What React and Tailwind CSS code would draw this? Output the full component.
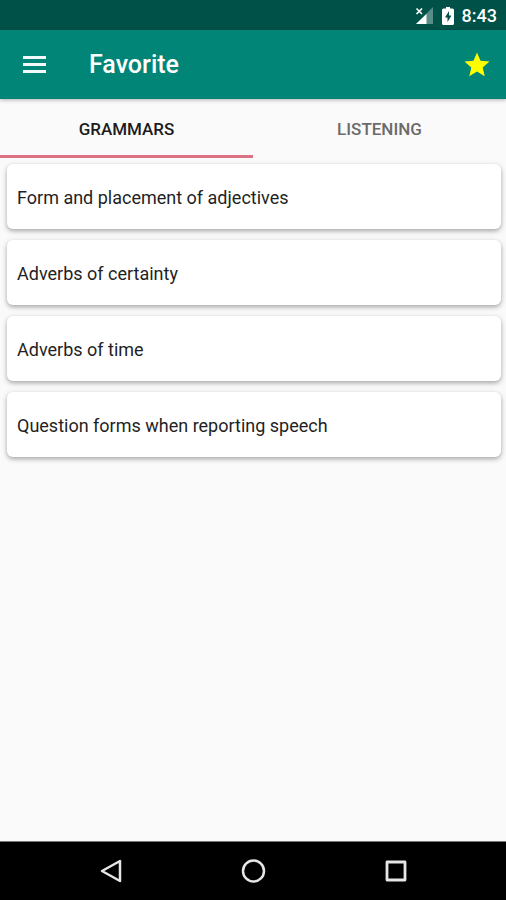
import { useState } from "react";

const favorites = {
    Grammars: [
        "Form and placement of adjectives",
        "Adverbs of certainty",
        "Adverbs of time",
        "Question forms when reporting speech",
    ],
    Listening: [],
};

function StatusBar() {
    return (
        <div className="flex h-[30px] items-center justify-end bg-[#005147] pr-[9px] pt-px text-white">
            <svg className="mr-2 h-5 w-5" viewBox="0 0 20 20" aria-label="No signal">
                <path d="M19 1V18H2z" fill="#fff" fillOpacity="0.35" />
                <path d="M12.5 8V18H2z" fill="#fff" />
                <path d="M2.5 2.5l5.5 5.5M8 2.5L2.5 8" stroke="#fff" strokeWidth="1.6" />
            </svg>
            <svg className="mr-2 h-5 w-3" viewBox="0 0 12 20" aria-label="Battery charging">
                <path d="M4 1h4v1.5h2.500a1.500 1.500 0 0 1 1.500 1.500v13.500a1.500 1.500 0 0 1-1.500 1.500h-9a1.500 1.500 0 0 1-1.500-1.500V4a1.500 1.500 0 0 1 1.500-1.500H4z" fill="#fff" />
                <path d="M7 5L3 11.500h2.500V16l4-6.500H7z" fill="#005147" />
            </svg>
            <span className="text-lg font-medium leading-5">8:43</span>
        </div>
    );
}

function Header() {
    return (
        <header className="relative flex h-[69px] items-center bg-[#008577] pl-[17px] pr-[14px] text-white shadow-[0_1px_4px_rgba(0,0,0,0.3)]">
            <button type="button" aria-label="Open menu" className="flex h-9 w-9 items-center justify-center">
                <svg className="h-6 w-6" viewBox="0 0 24 24" fill="#f2faf9">
                    <path d="M0 3h23v3H0zM0 10h23v3H0zM0 17h23v3H0z" />
                </svg>
            </button>
            <h1 className="ml-9 flex-1 pt-px text-[25px] font-medium">Favorite</h1>
            <button type="button" aria-label="Favorites" className="flex h-[30px] w-[30px] items-center justify-center">
                <svg className="h-[30px] w-[30px]" viewBox="0 0 24 24" fill="#ffff00">
                    <path d="M12 17.270L18.180 21l-1.640-7.030L22 9.240l-7.190-.61L12 2 9.190 8.630 2 9.240l5.460 4.730L5.820 21z" />
                </svg>
            </button>
        </header>
    );
}

function BottomNav() {
    return (
        <nav className="grid h-[59px] grid-cols-3 border-t border-[#777] bg-black px-10">
            <button type="button" aria-label="Back" className="flex items-center justify-center">
                <svg className="h-7 w-7" viewBox="0 0 28 28" fill="none" stroke="#e6e6e6" strokeWidth="2.5" strokeLinejoin="round">
                    <path d="M23 4v20L5 14z" />
                </svg>
            </button>
            <button type="button" aria-label="Home" className="flex items-center justify-center">
                <svg className="h-7 w-7" viewBox="0 0 28 28" fill="none" stroke="#e6e6e6" strokeWidth="2.5">
                    <circle cx="14.5" cy="14" r="10.500" />
                </svg>
            </button>
            <button type="button" aria-label="Recent apps" className="flex items-center justify-center">
                <svg className="h-7 w-7" viewBox="0 0 28 28" fill="none" stroke="#e6e6e6" strokeWidth="2.800" strokeLinejoin="round">
                    <path d="M6 5h18v18H6z" />
                </svg>
            </button>
        </nav>
    );
}

export default function App() {
    const [tab, setTab] = useState("Grammars");

    return (
        <div className="flex min-h-screen flex-col bg-[#fafafa] font-['Roboto',sans-serif]">
            <StatusBar />
            <Header />
            <div role="tablist" className="grid h-[59px] grid-cols-2">
                {Object.keys(favorites).map((name) => (
                    <button
                        key={name}
                        type="button"
                        role="tab"
                        aria-selected={tab === name}
                        onClick={() => setTab(name)}
                        className={
                            tab === name
                                ? "border-b-3 border-[#dc7284] pt-[5px] text-[17px] font-medium uppercase text-[#1c1c1c]"
                                : "border-b-3 border-transparent pt-[5px] text-[17px] font-medium uppercase text-[#6b6b6b]"
                        }
                    >
                        {name}
                    </button>
                ))}
            </div>
            <main className="flex-1">
                <ul className="flex flex-col gap-[11px] py-[6px] pl-[7px] pr-[5px]">
                    {favorites[tab].map((item) => (
                        <li key={item} className="flex h-[65px] items-center rounded-md bg-white px-[10px] pt-[2px] text-lg text-[#1f1f24] shadow-[0_2px_5px_rgba(0,0,0,0.35)]">
                            {item}
                        </li>
                    ))}
                </ul>
            </main>
            <BottomNav />
        </div>
    );
}
